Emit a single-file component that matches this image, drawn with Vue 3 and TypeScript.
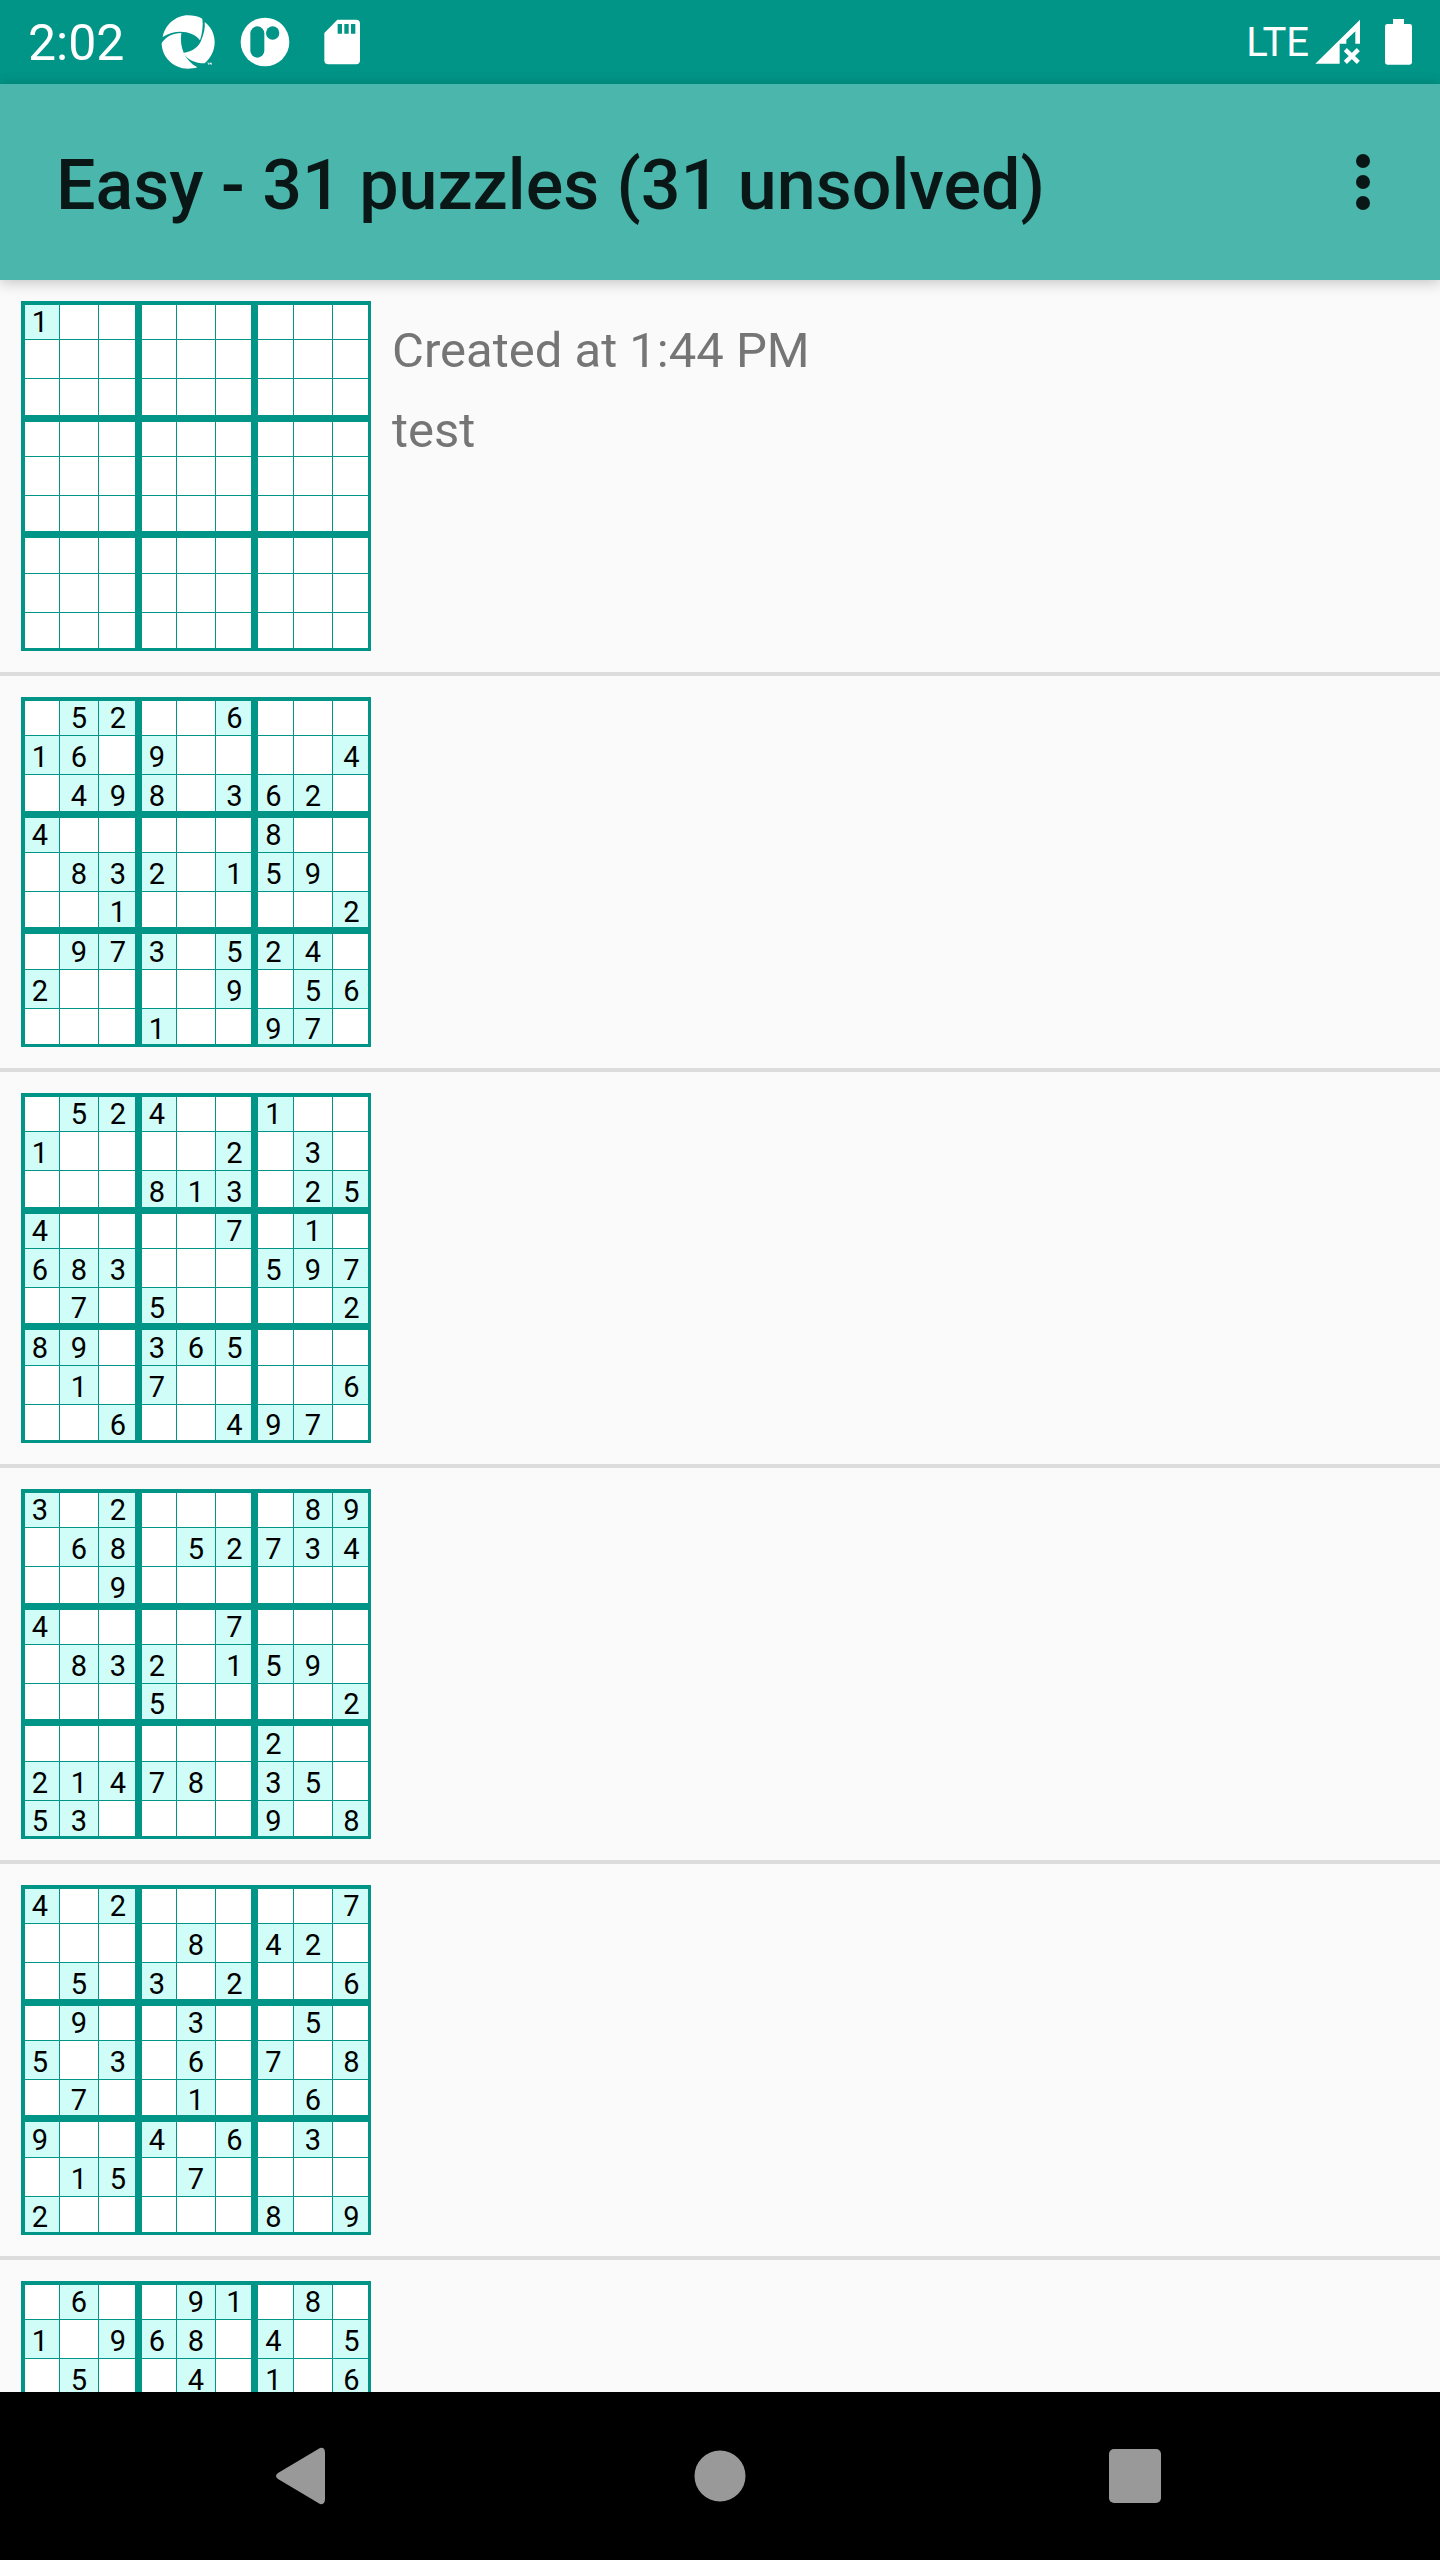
<script setup lang="ts">
interface Puzzle {
  id: number
  created?: string
  note?: string
  rows: string[]
}

const empty = '.........'

const puzzles: Puzzle[] = [
  {
    id: 1,
    created: 'Created at 1:44 PM',
    note: 'test',
    rows: ['1........', empty, empty, empty, empty, empty, empty, empty, empty],
  },
  {
    id: 2,
    rows: [
      '.52..6...', '16.9....4', '.498.362.',
      '4.....8..', '.832.159.', '..1.....2',
      '.973.524.', '2....9.56', '...1..97.',
    ],
  },
  {
    id: 3,
    rows: [
      '.524..1..', '1....2.3.', '...813.25',
      '4....7.1.', '683...597', '.7.5....2',
      '89.365...', '.1.7....6', '..6..497.',
    ],
  },
  {
    id: 4,
    rows: [
      '3.2....89', '.68.52734', '..9......',
      '4....7...', '.832.159.', '...5....2',
      '......2..', '21478.35.', '53....9.8',
    ],
  },
  {
    id: 5,
    rows: [
      '4.2.....7', '....8.42.', '.5.3.2..6',
      '.9..3..5.', '5.3.6.7.8', '.7..1..6.',
      '9..4.6.3.', '.15.7....', '2.....8.9',
    ],
  },
  {
    id: 6,
    rows: [
      '.6..91.8.', '1.968.4.5', '.5..4.1.6',
      empty, empty, empty, empty, empty, empty,
    ],
  },
]

const clue = (c: string): string => (c === '.' ? '' : c)
</script>

<template>
  <div class="screen">
    <div class="status">
      <div class="status-left">
        <span class="clock">2:02</span>
        <svg class="status-icon" viewBox="478 43 168 168" aria-hidden="true">
          <path class="w" d="M486 112C493 76 525 47 562 47C577 47 592 50 605 57C608 78 605 101 598 122C575 92 524 88 486 112Z" />
          <path class="w" d="M612 67C632 82 642 104 642 128C642 153 630 176 612 191C583 191 561 180 547 160C577 156 596 140 602 121C610 102 614 85 612 67Z" />
          <path class="w" d="M483 130C496 110 517 101 542 100C536 143 552 182 590 203C581 206 571 207 562 207C518 207 483 172 483 130Z" />
          <path class="w" d="M620 189h6v2h-2v4h-2v-4h-2zM627 189h6v6h-2v-3l-1 2l-1-2v3h-2z" />
        </svg>
        <svg class="status-icon" viewBox="709 43 168 168" aria-hidden="true">
          <circle class="w" cx="793" cy="127" r="73" />
          <rect class="t" x="749" y="80" width="42" height="94" rx="21" />
          <circle class="t" cx="816" cy="100" r="20" />
        </svg>
        <svg class="status-icon" viewBox="940 43 168 168" aria-hidden="true">
          <path class="w" d="M1010 60H1066Q1078 60 1078 72V182Q1078 194 1066 194H983Q971 194 971 182V100Z" />
          <path class="t" d="M1011 73h13v29h-13zM1031 73h13v29h-13zM1051 73h13v29h-13z" />
        </svg>
      </div>
      <div class="status-right">
        <span class="network">LTE</span>
        <svg class="signal" viewBox="345 57 138 138" aria-hidden="true">
          <path class="w" d="M480 59V131H466V94L439 119V131H419V191H346Z" />
          <path class="x" d="M436 149L475 187M475 149L436 187" />
        </svg>
        <svg class="battery" viewBox="555 57 81 138" aria-hidden="true">
          <path class="w" d="M579 57H612V72H629Q636 72 636 79V187Q636 194 629 194H562Q555 194 555 187V79Q555 72 562 72H579Z" />
        </svg>
      </div>
    </div>

    <header class="app-bar">
      <h1>Easy - 31 puzzles (31 unsolved)</h1>
      <button type="button" class="more" aria-label="More options">
        <span></span><span></span><span></span>
      </button>
    </header>

    <ul class="list">
      <li v-for="p in puzzles" :key="p.id" class="item">
        <table class="board">
          <colgroup>
            <col v-for="n in 9" :key="n" :class="'c' + n" />
          </colgroup>
          <tbody>
            <tr v-for="(row, r) in p.rows" :key="r" :class="'r' + (r + 1)">
              <td v-for="(c, i) in row" :key="i" :class="{ given: c !== '.' }">{{ clue(c) }}</td>
            </tr>
          </tbody>
        </table>
        <div v-if="p.created" class="details">
          <p>{{ p.created }}</p>
          <p>{{ p.note }}</p>
        </div>
      </li>
    </ul>

    <nav class="nav">
      <button type="button" aria-label="Back">
        <svg viewBox="0 0 84 84"><path d="M57 14Q62 13 62 19V65Q62 71 57 70L15 45Q11 42 15 39Z" /></svg>
      </button>
      <button type="button" aria-label="Home">
        <svg viewBox="0 0 84 84"><circle cx="42" cy="42" r="25.500" /></svg>
      </button>
      <button type="button" aria-label="Recent apps">
        <svg viewBox="0 0 84 84"><rect x="16" y="15" width="52" height="54" rx="5" /></svg>
      </button>
    </nav>
  </div>
</template>

<style>
body {
  margin: 0;
}
</style>

<style scoped>
.screen {
  display: flex;
  flex-direction: column;
  height: 100vh;
  overflow: hidden;
  background: #fafafa;
  font-family: Roboto, "Liberation Sans", sans-serif;
}
button {
  border: 0;
  padding: 0;
  background: none;
}
svg {
  display: block;
}

.status {
  flex: none;
  display: flex;
  align-items: center;
  justify-content: space-between;
  height: 84px;
  padding: 0 28px;
  background: #009587;
  color: #fff;
}
.status-left,
.status-right {
  display: flex;
  align-items: center;
}
.status-left {
  gap: 21px;
}
.clock {
  width: 111px;
  padding-top: 2px;
  font-size: 50px;
  line-height: 56px;
}
.status-icon {
  width: 56px;
  height: 56px;
}
.w {
  fill: #fff;
}
.t {
  fill: #009587;
}
.x {
  stroke: #fff;
  stroke-width: 13;
}
.network {
  padding-top: 2px;
  font-size: 40px;
  line-height: 56px;
}
.signal {
  width: 46px;
  height: 46px;
  margin: 0 24px 0 6px;
}
.battery {
  width: 27px;
  height: 46px;
}

.app-bar {
  position: relative;
  flex: none;
  display: flex;
  align-items: center;
  justify-content: space-between;
  height: 196px;
  padding: 0 35px 0 56px;
  background: #4ab6ac;
  box-shadow: 0 2px 14px rgba(0, 0, 0, 0.24);
}
h1 {
  margin: 0;
  padding-top: 5px;
  font-size: 70px;
  font-weight: 500;
  line-height: 84px;
  color: rgba(0, 0, 0, 0.87);
}
.more {
  display: flex;
  flex-direction: column;
  align-items: center;
  justify-content: center;
  gap: 7px;
  width: 84px;
  height: 84px;
}
.more span {
  width: 14px;
  height: 14px;
  border-radius: 50%;
  background: rgba(0, 0, 0, 0.87);
}

.list {
  flex: 1;
  min-height: 0;
  margin: 0;
  padding: 0;
  overflow-y: auto;
  scrollbar-width: none;
  list-style: none;
}
.item {
  display: flex;
  gap: 21px;
  padding: 21px;
  border-bottom: 4px solid #dcdcdc;
}
.details {
  flex: 1;
  padding-top: 10px;
}
p {
  margin: 0;
  font-size: 49px;
  line-height: 80px;
  color: #757575;
}

.board {
  flex: none;
  box-sizing: border-box;
  width: 350px;
  table-layout: fixed;
  border: 4px solid #009587;
  border-width: 4px 3px 3px 4px;
  border-spacing: 0;
  background: #fff;
}
.c1, .c4 { width: 35px; }
.c2, .c5, .c8 { width: 39px; }
.c3 { width: 43px; }
.c6 { width: 42px; }
.c7 { width: 36px; }
.c9 { width: 35px; }
.r1, .r4 { height: 35px; }
.r2, .r5, .r8 { height: 39px; }
.r3 { height: 43px; }
.r6 { height: 42px; }
.r7 { height: 36px; }
.r9 { height: 35px; }
td {
  box-sizing: border-box;
  padding: 0;
  border: 0 solid #009587;
  border-width: 0 1px 1px 0;
  font-size: 29px;
  line-height: 30px;
  text-align: center;
  color: #000;
}
td:nth-child(3n + 1) {
  padding-right: 4px;
}
td:nth-child(3n) {
  padding-left: 2px;
}
tr:nth-child(3n + 2) td {
  padding-top: 3px;
}
tr:nth-child(3n) td {
  padding-top: 5px;
}
td:nth-child(3),
td:nth-child(6) {
  border-right-width: 7px;
}
tr:nth-child(3) td,
tr:nth-child(6) td {
  border-bottom-width: 7px;
}
td:last-child {
  border-right-width: 0;
}
tr:last-child td {
  border-bottom-width: 0;
}
.given {
  background: #d0fdf8;
}

.nav {
  flex: none;
  display: flex;
  align-items: center;
  height: 168px;
  padding: 0 97px;
  background: #000;
}
.nav button {
  flex: 1;
  display: flex;
  justify-content: center;
}
.nav svg {
  width: 84px;
  height: 84px;
  fill: #999;
}
</style>
